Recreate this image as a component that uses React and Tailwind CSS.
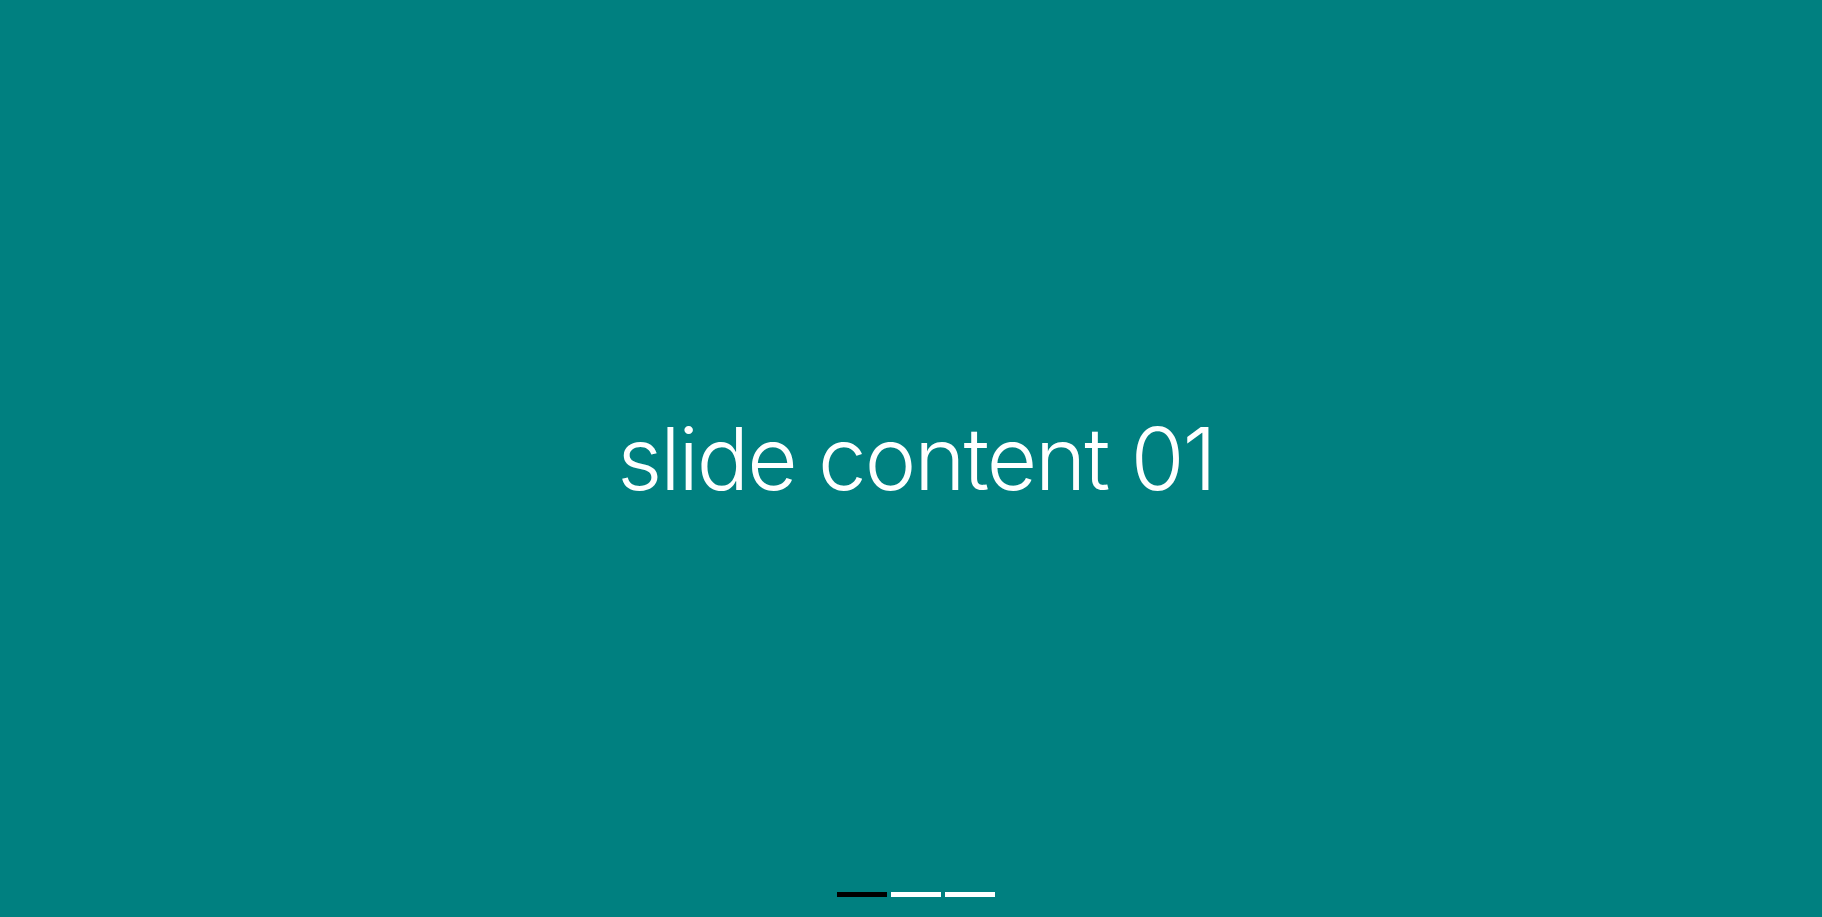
import { useState } from 'react';

const slides = ['slide content 01', 'slide content 02', 'slide content 03'];

const App = () => {
  const [active, setActive] = useState(0);

  return (
    <div className="relative h-screen w-full overflow-hidden bg-[#008080] pl-[10px]">
      {/* Slide */}
      <div className="flex h-full w-full items-center justify-center">
        <h1
          className="text-[87px] font-light leading-none tracking-[-2px] text-white"
          style={{ fontFamily: "Inter, 'Noto Sans', sans-serif" }}
        >
          {slides[active]}
        </h1>
      </div>

      {/* Pagination */}
      <div className="absolute bottom-[20px] left-[10px] right-0 flex justify-center gap-[4px]">
        {slides.map((s, i) => (
          <button
            key={s}
            onClick={() => setActive(i)}
            className={`h-[5px] w-[50px] ${i === active ? 'bg-black' : 'bg-white'}`}
            aria-label={`Go to slide ${i + 1}`}
          />
        ))}
      </div>
    </div>
  );
};

export default App;
